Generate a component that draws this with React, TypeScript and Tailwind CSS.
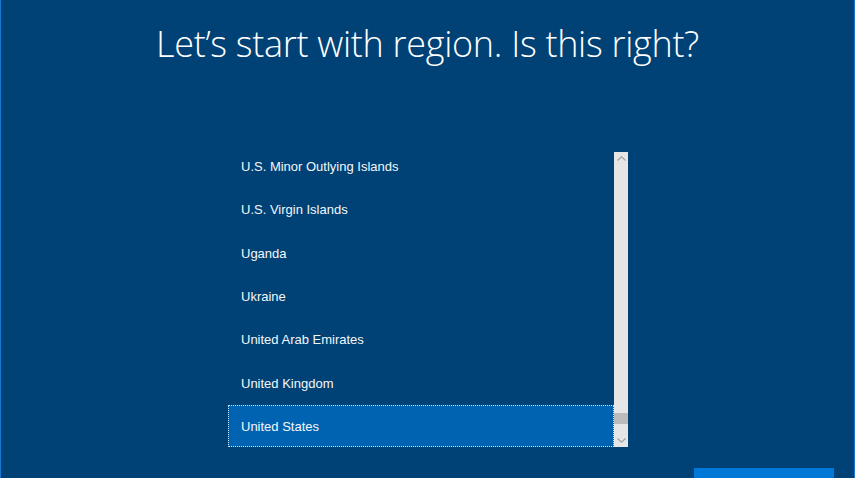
const REGIONS = [
  "U.S. Minor Outlying Islands",
  "U.S. Virgin Islands",
  "Uganda",
  "Ukraine",
  "United Arab Emirates",
  "United Kingdom",
  "United States",
];

function Chevron({ up }: { up?: boolean }) {
  return (
    <svg width="9" height="5" viewBox="0 0 9 5" className="block">
      <path
        d={up ? "M0.5 4.5 L4.5 0.8 L8.5 4.5" : "M0.5 0.5 L4.5 4.2 L8.5 0.5"}
        fill="none"
        stroke="#a3a3a3"
        strokeWidth="1.2"
      />
    </svg>
  );
}

export default function App() {
  const selected = "United States";
  return (
    <div
      className="w-[855px] h-[478px] overflow-hidden bg-[#004275] border-x border-[#1a78d0] flex flex-col items-center"
      style={{ fontFamily: '"Open Sans", "Noto Sans", sans-serif' }}
    >
      <h1 className="mt-[22px] text-[36px] leading-[43px] font-light text-white tracking-[-0.3px]">
        Let’s start with region. Is this right?
      </h1>

      <div className="mt-[87px] ml-[1px] flex h-[295px] w-[400px]">
        <div className="flex-1 overflow-hidden">
          <ul className="-mt-[7px] font-['Liberation_Sans',Arial,sans-serif]">
            {REGIONS.map((r) => (
              <li
                key={r}
                className={
                  r === selected
                    ? "h-[42px] flex items-center pl-[12px] pt-[2px] text-[13px] text-[#f4f7fa] bg-[#0063b1] border border-dotted border-white/80"
                    : "h-[43.34px] flex items-center pl-[13px] text-[13px] text-[#f4f7fa]"
                }
              >
                {r}
              </li>
            ))}
          </ul>
        </div>
        <div className="w-[14px] bg-[#e6e6e6] flex flex-col items-center justify-between py-[4px]">
          <Chevron up />
          <div className="flex-1 w-full flex flex-col justify-end pb-[14px]">
            <div className="h-[11px] w-full bg-[#bcbcbc]" />
          </div>
          <Chevron />
        </div>
      </div>

      <div className="flex-1 w-full flex items-end justify-end pr-[20px]">
        <div className="w-[140px] h-[10px] bg-[#0078d7]" />
      </div>
    </div>
  );
}
